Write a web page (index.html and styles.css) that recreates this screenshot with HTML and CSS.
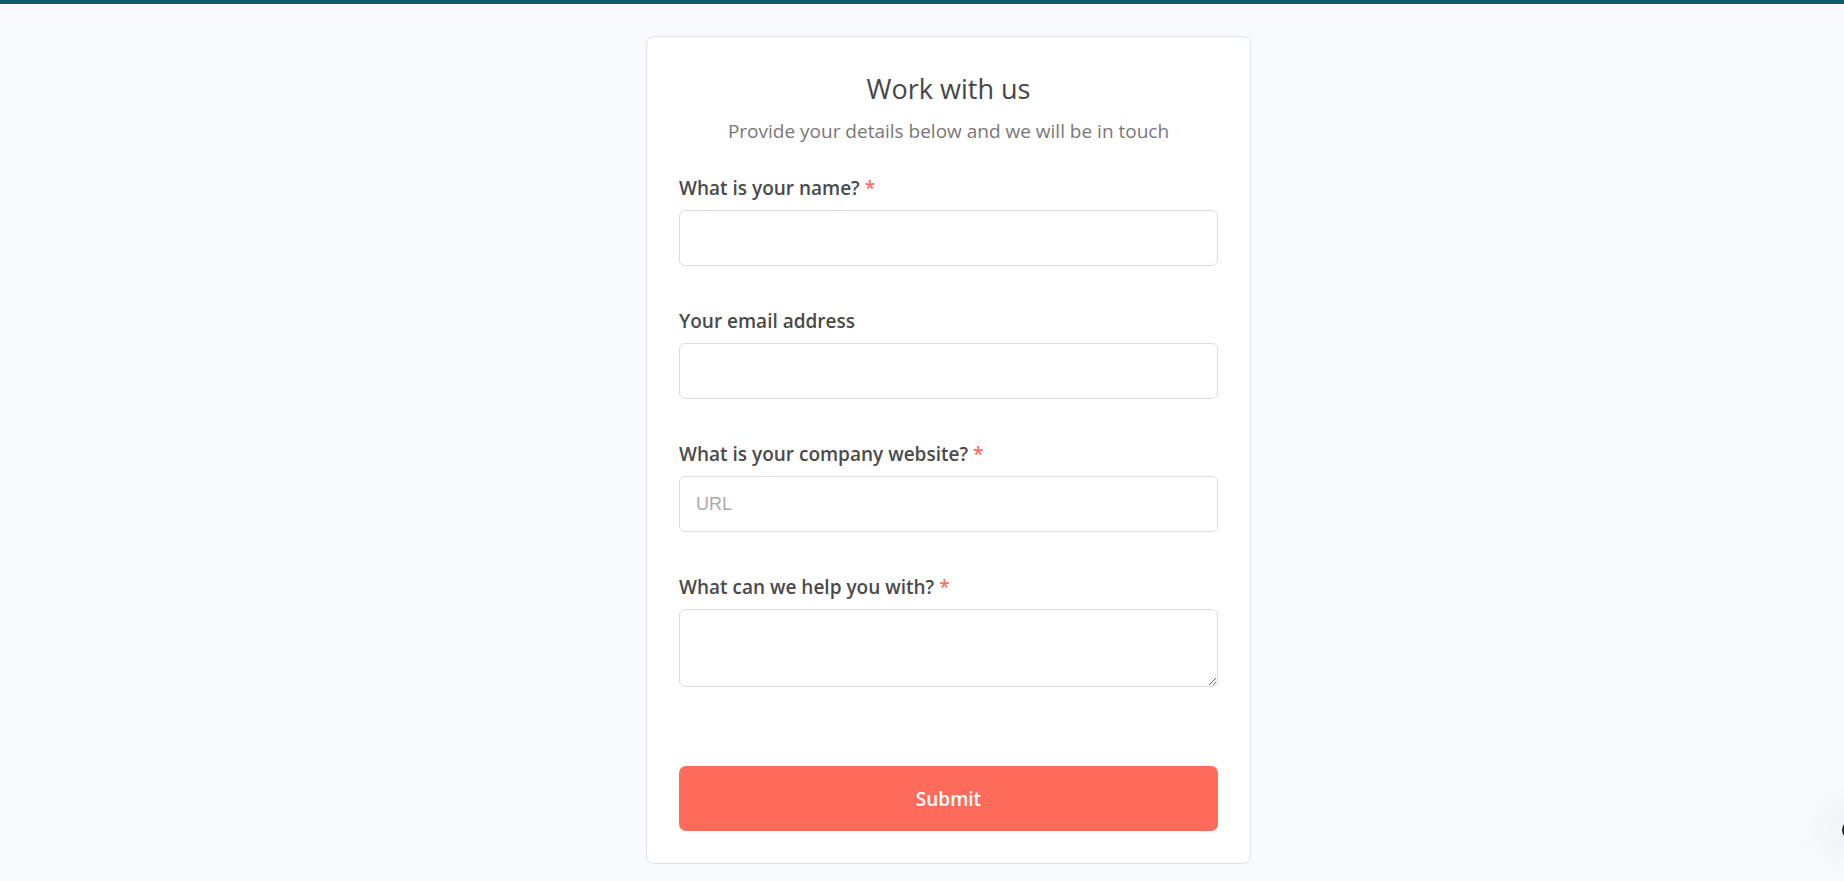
FILE: index.html
```html
<!DOCTYPE html>
<html lang="en">
<head>
<meta charset="utf-8">
<title>Work with us</title>
<link rel="stylesheet" href="styles.css">
</head>
<body>
<div class="topbar"></div>
<main class="page">
  <form class="card">
    <h1 class="title">Work with us</h1>
    <p class="subtitle">Provide your details below and we will be in touch</p>

    <div class="field">
      <label class="label" for="name">What is your name? <span class="req">*</span></label>
      <input class="input" id="name" type="text">
    </div>

    <div class="field">
      <label class="label" for="email">Your email address</label>
      <input class="input" id="email" type="email">
    </div>

    <div class="field">
      <label class="label" for="site">What is your company website? <span class="req">*</span></label>
      <input class="input" id="site" type="text" placeholder="URL">
    </div>

    <div class="field">
      <label class="label" for="help">What can we help you with? <span class="req">*</span></label>
      <textarea class="textarea" id="help"></textarea>
    </div>

    <button class="submit" type="button">Submit</button>
  </form>
</main>
<div class="widget"></div>
</body>
</html>
```

FILE: styles.css
```css
* { box-sizing: border-box; }

html, body {
  margin: 0;
  padding: 0;
  height: 100%;
}

body {
  background: #f9fafd;
  font-family: "Open Sans", "Noto Sans", sans-serif;
  color: #4a4a4a;
  overflow: hidden;
}

.topbar {
  height: 4px;
  background: #0f5f66;
}

.page {
  display: flex;
  justify-content: center;
  padding: 32px 0 0 53px;
}

.card {
  width: 605px;
  background: #ffffff;
  border: 1px solid #e0e0f0;
  border-radius: 8px;
  padding: 32px 32px 32px;
  display: flex;
  flex-direction: column;
}

.title {
  margin: 0;
  font-size: 27px;
  line-height: 40px;
  font-weight: 400;
  text-align: center;
  color: #464646;
}

.subtitle {
  margin: 9px 0 0;
  font-size: 19px;
  line-height: 26px;
  text-align: center;
  color: #7b7676;
}

.field {
  display: flex;
  flex-direction: column;
  margin-top: 43px;
}

.field:first-of-type {
  margin-top: 32px;
}

.label {
  font-size: 19px;
  line-height: 24px;
  font-weight: 600;
  color: #4a4a4a;
  margin-bottom: 10px;
}

.req {
  color: #ff6b5b;
}

.input,
.textarea {
  width: 100%;
  border: 1px solid #dcdce6;
  border-radius: 6px;
  background: #fff;
  font-family: "Liberation Sans", Arial, sans-serif;
  font-size: 18px;
  color: #333;
  padding: 0 16px;
  outline: none;
}

.input {
  height: 56px;
}

.input::placeholder {
  color: #aaaaaa;
}

.textarea {
  height: 78px;
  padding-top: 12px;
  resize: vertical;
  display: block;
}

.submit {
  margin-top: 79px;
  height: 65px;
  width: 100%;
  border: none;
  border-radius: 7px;
  background: #ff6b5b;
  color: #ffffff;
  font-family: "Open Sans", "Noto Sans", sans-serif;
  font-size: 19px;
  font-weight: 600;
  cursor: pointer;
}

.widget {
  position: fixed;
  left: 1842px;
  top: 820px;
  width: 40px;
  height: 20px;
  background: #1a1a22;
  border-radius: 10px;
  box-shadow: 0 0 40px 20px rgba(0, 0, 0, 0.04);
}
```
